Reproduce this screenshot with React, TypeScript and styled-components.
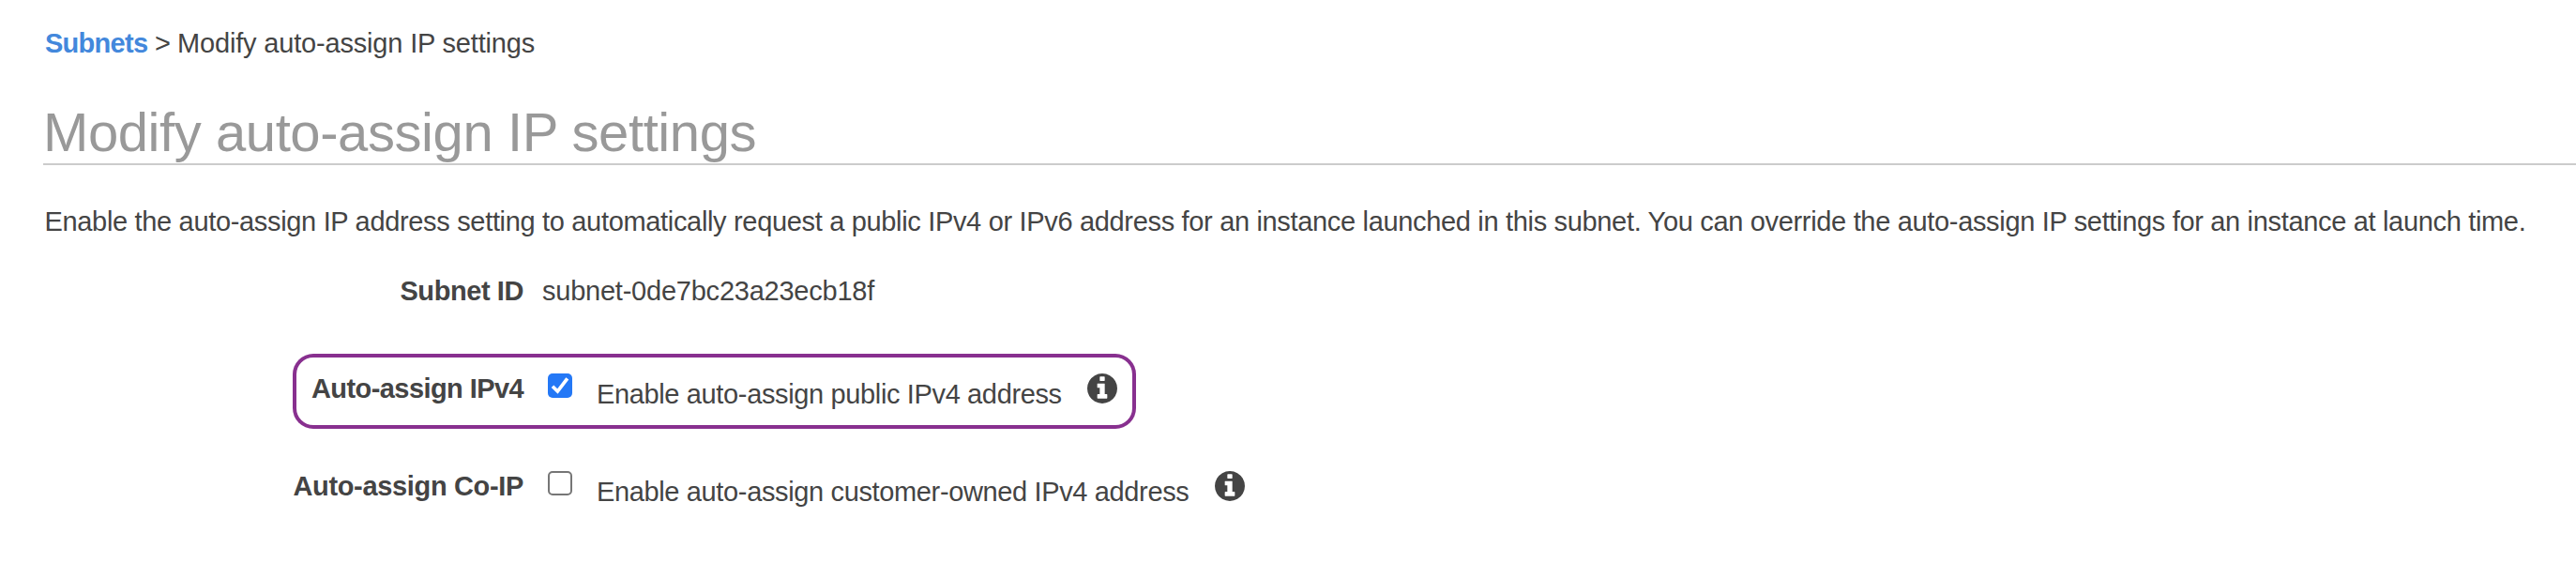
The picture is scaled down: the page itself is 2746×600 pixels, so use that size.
import React from "react";
import styled, { createGlobalStyle } from "styled-components";

const GlobalStyle = createGlobalStyle`
  body {
    margin: 0;
    background: #fff;
    color: #444;
    font: 29px/32px "Liberation Sans", Arial, sans-serif;
    overflow: hidden;
  }
`;

const Page = styled.main`
  height: 600px;
  box-sizing: border-box;
  padding: 30px 0 0 46px;
  white-space: nowrap;
`;

const Breadcrumb = styled.nav`
  display: flex;
  height: 32px;
  padding-left: 2px;
`;

const Crumb = styled.a`
  color: #4388dc;
  font-weight: bold;
  letter-spacing: -0.73px;
`;

const Separator = styled.span`
  width: 24px;
  margin-left: 7.8px;
`;

const CurrentPage = styled.span`
  letter-spacing: -0.18px;
`;

const Title = styled.h1`
  margin: 46px 0 0;
  padding-bottom: 1px;
  border-bottom: 2px solid #ccc;
  color: #999;
  font-size: 58px;
  font-weight: normal;
  line-height: 65px;
  letter-spacing: -0.42px;
`;

const Description = styled.p`
  margin: 44px 0 42px;
  padding-left: 1.5px;
  letter-spacing: -0.329px;
`;

const Form = styled.div`
  display: flex;
  flex-direction: column;
  align-items: flex-start;
  margin-left: 266px;
`;

const Field = styled.div`
  display: flex;
  align-items: flex-start;
  height: 32px;
  margin-bottom: 51px;
`;

const OptionField = styled.div<{ $highlighted?: boolean }>`
  display: flex;
  align-items: flex-start;
  box-sizing: border-box;
  height: 80px;
  margin-bottom: 24px;
  padding: 21px 19.5px 0 0;
  border-radius: 22px;
  box-shadow: ${(p) => (p.$highlighted ? "inset 0 0 0 4px #88308f" : "none")};
`;

const Label = styled.div<{ $tracking: number }>`
  display: flex;
  justify-content: flex-end;
  width: 246px;
  font-weight: bold;
  letter-spacing: ${(p) => p.$tracking}px;
`;

const Value = styled.div`
  margin-left: 20px;
  letter-spacing: -0.23px;
`;

const CheckBox = styled.span<{ $checked: boolean }>`
  display: flex;
  box-sizing: border-box;
  width: 26px;
  height: 26px;
  margin-left: 26px;
  border: ${(p) => (p.$checked ? "none" : "2px solid #767676")};
  border-radius: 5px;
  background: ${(p) => (p.$checked ? "#2478f6" : "#fff")};
`;

const OptionText = styled.span`
  margin: 6px 27.6px 0 26px;
  letter-spacing: -0.36px;
`;

const Icon = styled.svg`
  display: block;
  width: 32px;
  height: 32px;
  fill: #444;
`;

const InfoIcon = () => (
  <Icon viewBox="0 0 1536 1536">
    <path d="M1024 1248v-160q0-14-9-23t-23-9h-96v-512q0-14-9-23t-23-9h-320q-14 0-23 9t-9 23v160q0 14 9 23t23 9h96v320h-96q-14 0-23 9t-9 23v160q0 14 9 23t23 9h448q14 0 23-9t9-23zm-128-896v-160q0-14-9-23t-23-9h-192q-14 0-23 9t-9 23v160q0 14 9 23t23 9h192q14 0 23-9t9-23zm640 416q0 209-103 385.5t-279.5 279.5-385.5 103-385.5-103-279.5-279.5-103-385.5 103-385.5 279.5-279.5 385.5-103 385.5 103 279.5 279.5 103 385.5z" />
  </Icon>
);

interface OptionProps {
  label: string;
  tracking: number;
  text: string;
  checked?: boolean;
  highlighted?: boolean;
}

const Option = ({ label, tracking, text, checked = false, highlighted }: OptionProps) => (
  <OptionField $highlighted={highlighted}>
    <Label $tracking={tracking}>{label}</Label>
    <CheckBox $checked={checked} role="checkbox" aria-checked={checked}>
      {checked && (
        <svg width="26" height="26" viewBox="0 0 26 26">
          <path d="M5 13.7L10.4 19L20.8 5.3" fill="none" stroke="#fff" strokeWidth="3.7" />
        </svg>
      )}
    </CheckBox>
    <OptionText>{text}</OptionText>
    <InfoIcon />
  </OptionField>
);

export default function App() {
  return (
    <Page>
      <GlobalStyle />
      <Breadcrumb>
        <Crumb>Subnets</Crumb>
        <Separator>&gt;</Separator>
        <CurrentPage>Modify auto-assign IP settings</CurrentPage>
      </Breadcrumb>
      <Title>Modify auto-assign IP settings</Title>
      <Description>
        Enable the auto-assign IP address setting to automatically request a public IPv4 or IPv6
        address for an instance launched in this subnet. You can override the auto-assign IP
        settings for an instance at launch time.
      </Description>
      <Form>
        <Field>
          <Label $tracking={-0.42}>Subnet ID</Label>
          <Value>subnet-0de7bc23a23ecb18f</Value>
        </Field>
        <Option
          label="Auto-assign IPv4"
          tracking={-0.58}
          text="Enable auto-assign public IPv4 address"
          checked
          highlighted
        />
        <Option
          label="Auto-assign Co-IP"
          tracking={-0.34}
          text="Enable auto-assign customer-owned IPv4 address"
        />
      </Form>
    </Page>
  );
}
